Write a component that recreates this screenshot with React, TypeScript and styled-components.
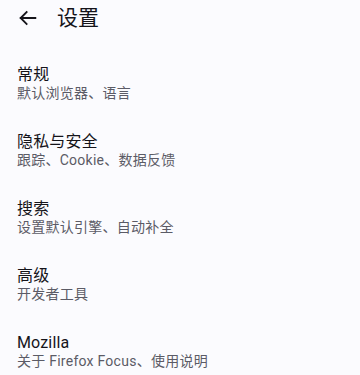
import React from "react";
import styled, { createGlobalStyle } from "styled-components";

const GlobalStyle = createGlobalStyle`
  html, body {
    margin: 0;
    padding: 0;
    background: #fbfbfe;
  }
  body {
    font-family: Roboto, "Noto Sans CJK SC", sans-serif;
    color: #15141a;
  }
`;

const items = [
  { title: "常规", summary: "默认浏览器、语言" },
  { title: "隐私与安全", summary: "跟踪、Cookie、数据反馈" },
  { title: "搜索", summary: "设置默认引擎、自动补全" },
  { title: "高级", summary: "开发者工具" },
  { title: "Mozilla", summary: "关于 Firefox Focus、使用说明" },
];

const App: React.FC = () => {
  return (
    <Page>
      <GlobalStyle />
      <Toolbar>
        <BackButton aria-label="返回">
          <svg width="22" height="22" viewBox="0 0 24 24" fill="none">
            <path
              d="M20 12H4M10.5 5.5L4 12l6.5 6.5"
              stroke="#15141a"
              strokeWidth="2"
              strokeLinecap="square"
            />
          </svg>
        </BackButton>
        <Title>设置</Title>
      </Toolbar>
      <List>
        {items.map((item) => (
          <Item key={item.title}>
            <ItemTitle>{item.title}</ItemTitle>
            <ItemSummary>{item.summary}</ItemSummary>
          </Item>
        ))}
      </List>
    </Page>
  );
};

const Page = styled.div`
  width: 360px;
  height: 375px;
  overflow: hidden;
  background: #fbfbfe;
`;

const Toolbar = styled.div`
  display: flex;
  align-items: center;
  height: 36px;
  padding-left: 16px;
`;

const BackButton = styled.div`
  display: flex;
  align-items: center;
  justify-content: center;
  width: 24px;
  height: 24px;
  margin-right: 17px;
`;

const Title = styled.div`
  font-size: 21px;
  line-height: 24px;
`;

const List = styled.div`
  display: flex;
  flex-direction: column;
  padding-top: 14px;
`;

const Item = styled.div`
  display: flex;
  flex-direction: column;
  padding: 16px 17px 15px;
  height: 36px;
`;

const ItemTitle = styled.div`
  font-size: 16px;
  line-height: 18px;
  letter-spacing: 0.15px;
  color: #15141a;
`;

const ItemSummary = styled.div`
  font-size: 14px;
  line-height: 18px;
  letter-spacing: 0.25px;
  color: #5b5b66;
`;

export default App;
